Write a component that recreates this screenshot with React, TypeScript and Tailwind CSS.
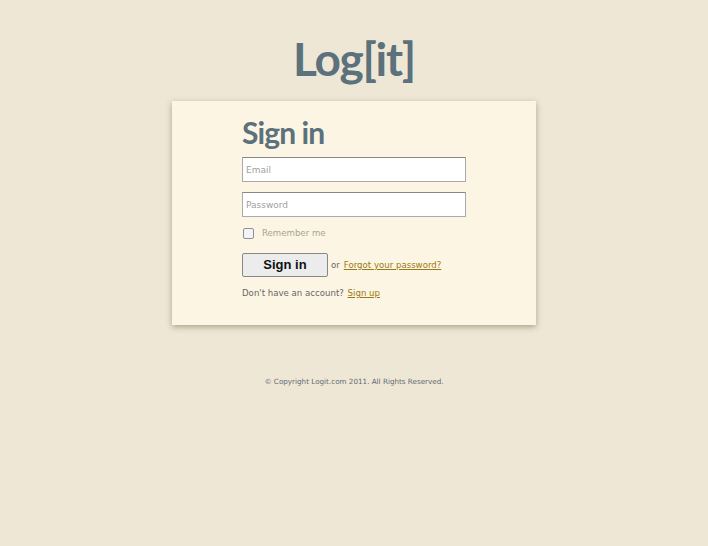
export default function App() {
  return (
    <div className="min-h-[546px] w-full bg-[#efe7d6] flex flex-col items-center">
      <h1 className="mt-[32px] text-[46px] leading-[54px] font-bold text-[#5b717c] font-['Lato',sans-serif] tracking-[-1.3px]">Log[it]</h1>
      <div className="mt-[15px] w-[364px] h-[224px] bg-[#fdf5e3] shadow-[0_2px_6px_rgba(90,75,40,0.45)] pl-[70px] pt-[14px]">
        <h2 className="text-[30px] leading-[34px] font-bold text-[#5b717c] font-['Lato',sans-serif] tracking-[-0.9px]">Sign in</h2>
        <input placeholder="Email" className="mt-[8px] block w-[224px] h-[25px] bg-white border border-[#aaa] border-t-[#888] px-[3px] text-[9px] font-['DejaVu_Sans',sans-serif] placeholder:text-[#a0a0a0] outline-none" />
        <input placeholder="Password" className="mt-[10px] block w-[224px] h-[25px] bg-white border border-[#aaa] border-t-[#888] px-[3px] text-[9px] font-['DejaVu_Sans',sans-serif] placeholder:text-[#a0a0a0] outline-none" />
        <div className="mt-[10px] flex items-center h-[12px]">
          <span className="w-[11px] h-[11px] border border-[#8a8f99] rounded-[2px] bg-[#f4f4f4] ml-[1px]"></span>
          <span className="ml-[8px] text-[8.6px] text-[#a8a39a] font-['DejaVu_Sans',sans-serif]">Remember me</span>
        </div>
        <div className="mt-[14px] flex items-center">
          <button className="w-[86px] h-[24px] bg-[#ececec] border border-[#888] rounded-[2px] text-[13px] font-bold text-[#111] font-['Liberation_Sans',sans-serif]">Sign in</button>
          <span className="ml-[3px] text-[8.6px] text-[#666] font-['DejaVu_Sans',sans-serif]">or</span>
          <a className="ml-[4px] text-[8.6px] text-[#9a7a10] underline font-['DejaVu_Sans',sans-serif]">Forgot your password?</a>
        </div>
        <div className="mt-[10px] text-[8.6px] text-[#666] font-['DejaVu_Sans',sans-serif]">
          Don't have an account? <a className="ml-[1px] text-[#9a7a10] underline">Sign up</a>
        </div>
      </div>
      <div className="mt-[52px] text-[7.2px] text-[#5e6a70] font-['DejaVu_Sans',sans-serif]">© Copyright Logit.com 2011. All Rights Reserved.</div>
    </div>
  );
}
